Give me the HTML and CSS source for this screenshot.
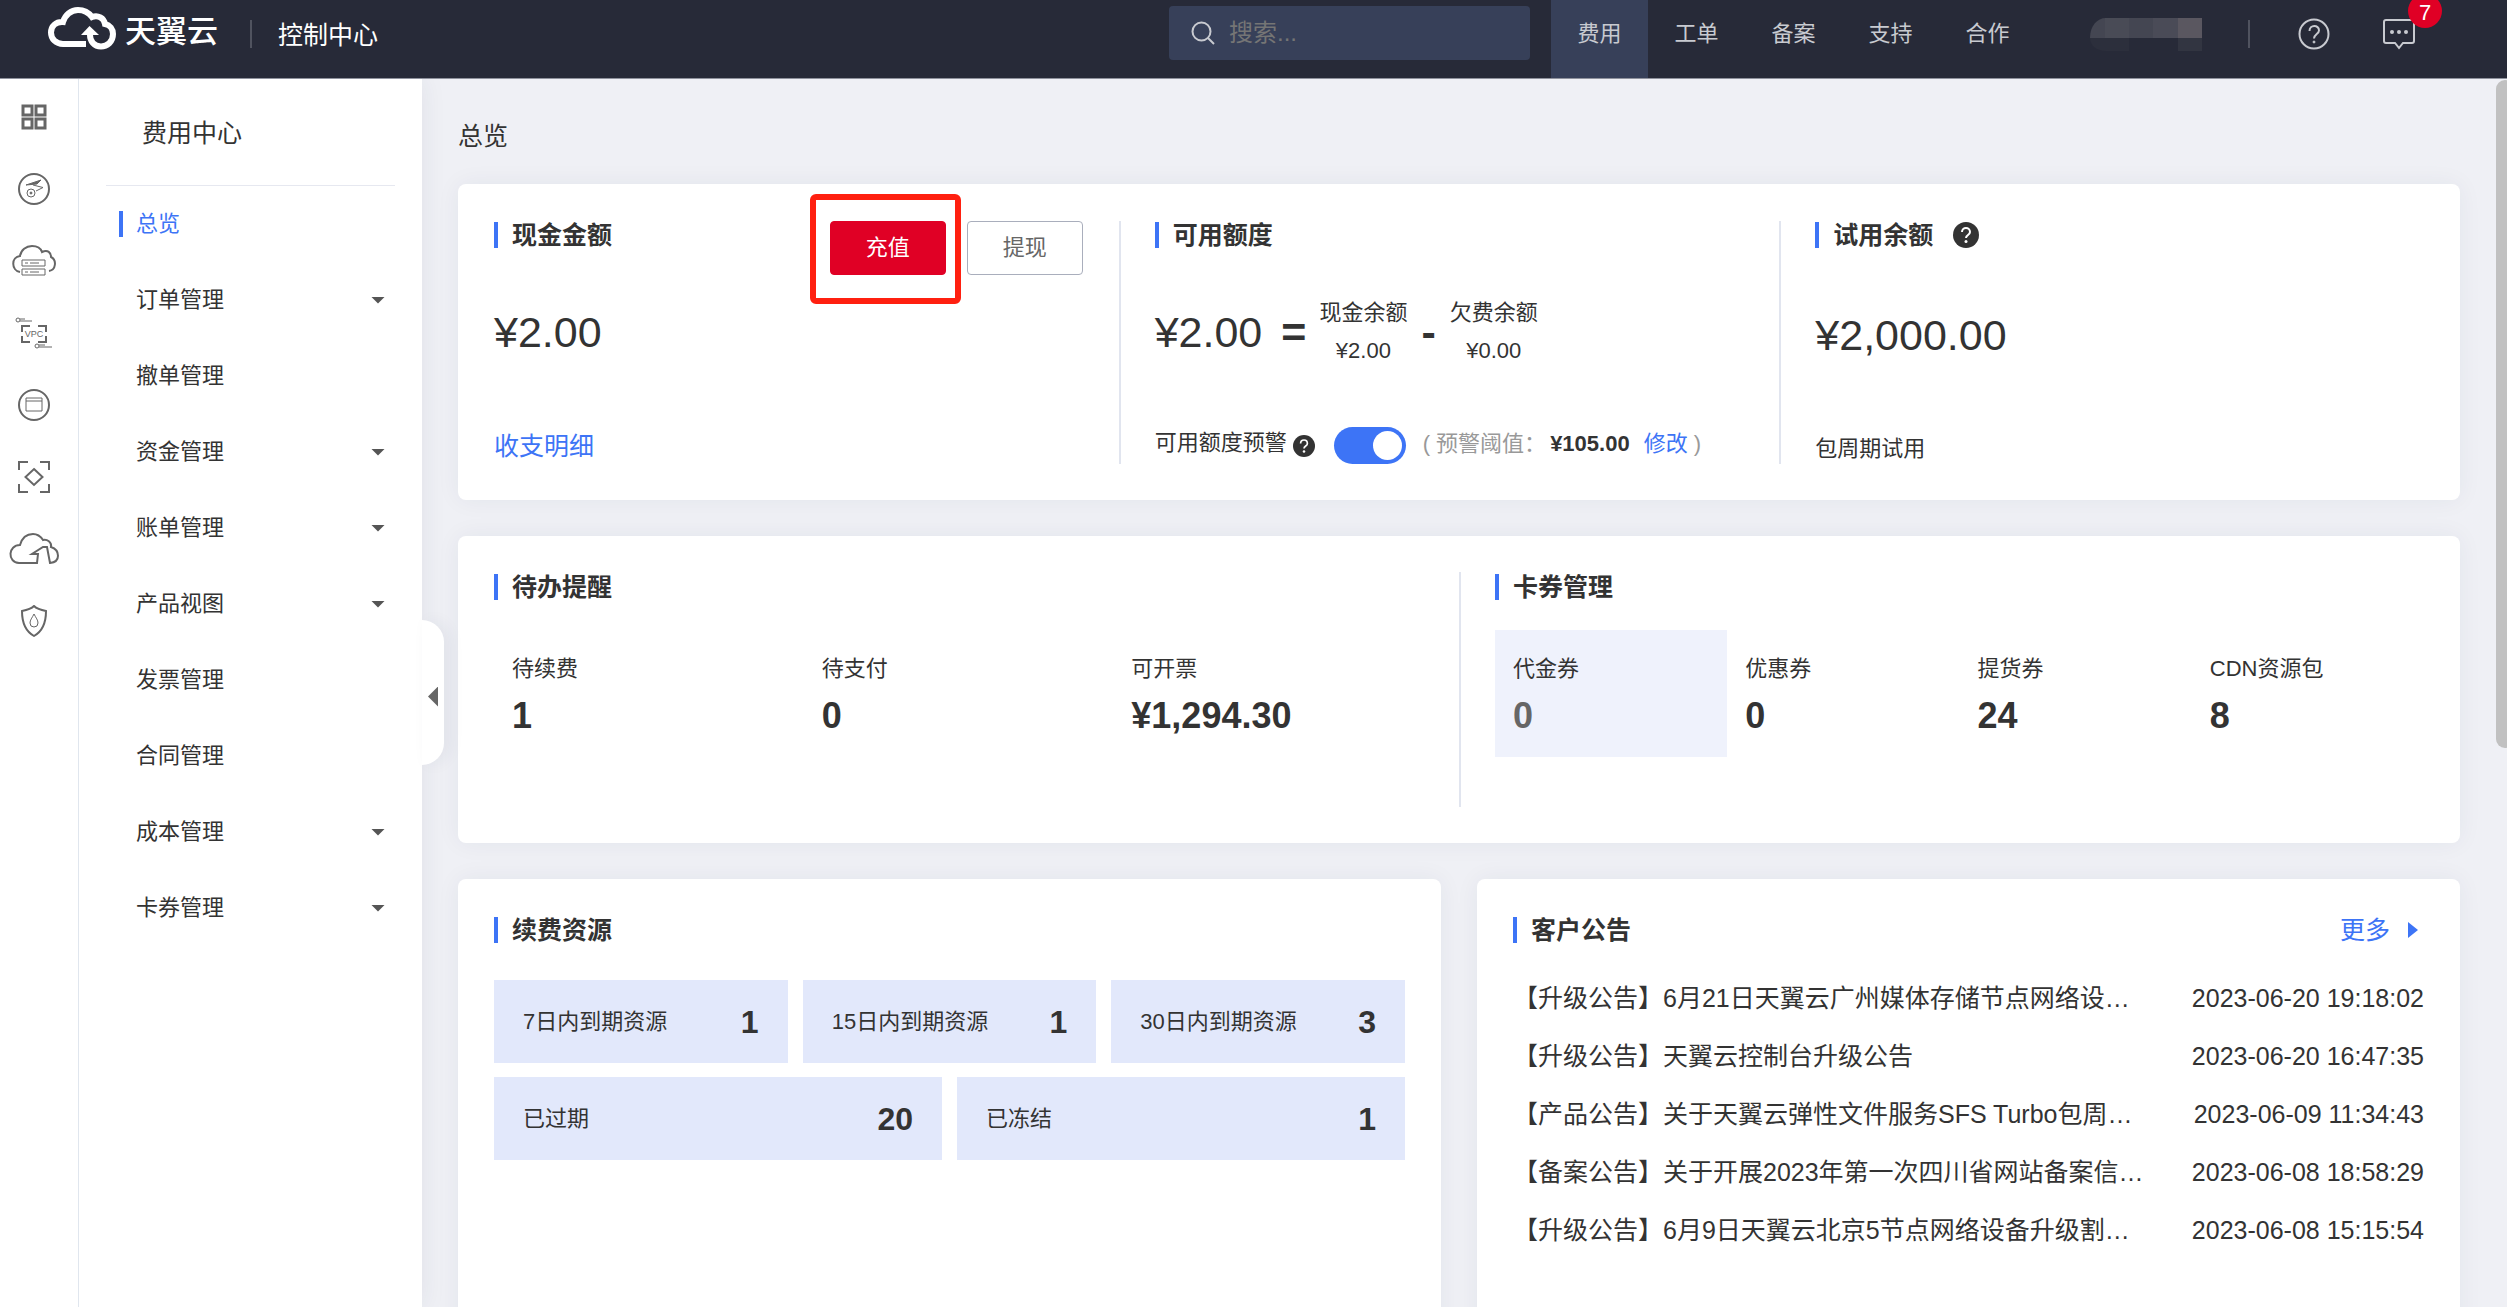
FILE: index.html
```html
<!DOCTYPE html>
<html lang="zh-CN">
<head>
<meta charset="utf-8">
<title>费用中心 - 总览</title>
<link rel="stylesheet" href="styles.css">
</head>
<body>
<div class="app">
  <header class="topbar">
    <div class="brand">
      <svg class="brand-mark" viewBox="0 0 68 43" width="68" height="43" fill="none" stroke="#fff" stroke-width="6">
        <path d="M38 37H15C8 37 3 32 3 25.500C3 19 8 14.500 15 15C17 8 23 3 30 3C37 3 41 6 44 10C50 7.500 56 11 57 17C62 18 65 22 65 27C65 35 59 39.500 53 39.500C46 39.500 42 34 42 28"/>
        <path d="M33 28L41.500 19L51 28Z" fill="#fff" stroke="none"/>
      </svg>
      <span class="brand-name">天翼云</span>
      <span class="rule"></span>
      <a class="console" href="#">控制中心</a>
    </div>
    <label class="search">
      <svg viewBox="0 0 24 24" width="24" height="24" fill="none" stroke="#c8cad0" stroke-width="2"><circle cx="10.500" cy="10.500" r="9"/><path d="M17 17l6 6"/></svg>
      <input type="search" placeholder="搜索..." aria-label="搜索">
    </label>
    <nav class="topnav">
      <a class="is-active" href="#">费用</a>
      <a href="#">工单</a>
      <a href="#">备案</a>
      <a href="#">支持</a>
      <a href="#">合作</a>
    </nav>
    <div class="tools">
      <svg class="account" viewBox="0 0 112 33" width="112" height="33">
        <path d="M16 0H112V20H0C0 8 7 0 16 0Z" fill="#444652"/>
        <path d="M0 20H39V33H16C7 33 0 28 0 20Z" fill="#2c2f3c"/>
        <rect x="15" width="24" height="20" fill="#494b56"/>
        <rect x="63" width="25" height="20" fill="#4a4b57"/>
        <rect x="88" width="24" height="20" fill="#5a5760"/>
        <rect x="88" y="20" width="24" height="13" fill="#323541"/>
      </svg>
      <span class="rule"></span>
      <button class="icon-btn" type="button" aria-label="帮助">
        <svg viewBox="0 0 32 32" width="32" height="32" fill="none" stroke="#c8cad0" stroke-width="2"><circle cx="16" cy="16" r="14.500"/><path d="M11.500 13C11.500 6.500 21 6.500 21 12.500C21 16 16 16 16 20.500"/><circle cx="16" cy="24" r="1" fill="#c8cad0" stroke-width="1"/></svg>
      </button>
      <button class="icon-btn message" type="button" aria-label="消息">
        <svg viewBox="0 0 32 32" width="32" height="32" fill="none" stroke="#c8cad0" stroke-width="2"><path d="M3 2H29Q31 2 31 4V23Q31 25 29 25H20L16 30L12 25H3Q1 25 1 23V4Q1 2 3 2Z"/><g fill="#c8cad0" stroke="none"><circle cx="9" cy="14" r="2"/><circle cx="16" cy="14" r="2"/><circle cx="23" cy="14" r="2"/></g></svg>
        <span class="badge">7</span>
      </button>
    </div>
  </header>

  <div class="body">
    <nav class="rail" aria-label="产品">
      <a href="#" aria-label="全部产品"><svg viewBox="0 0 26 26" width="26" height="26" fill="none" stroke="#666" stroke-width="3"><rect x="2" y="2" width="9" height="9"/><rect x="15" y="2" width="9" height="9"/><rect x="2" y="15" width="9" height="9"/><rect x="15" y="15" width="9" height="9"/></svg></a>
      <a href="#" aria-label="弹性伸缩"><svg viewBox="0 0 32 32" width="32" height="32" fill="none" stroke="#666" stroke-width="1"><circle cx="16" cy="16" r="15" stroke-width="2"/><path d="M8 12L23 7L19 11Z" fill="#666"/><path d="M15 12L25 14.500L18 18"/><circle cx="13" cy="20" r="4"/><circle cx="13" cy="20" r="1" fill="#666"/></svg></a>
      <a href="#" aria-label="云主机"><svg viewBox="0 0 44 32" width="44" height="32" fill="none" stroke="#666" stroke-width="2"><path d="M8 27C-1 25 -1 12 8 11C9 5 14 1 20 1C26 1 29 4 30 7C36 4 39 8 39 12C45 15 44 25 37 26"/><path d="M10 15H33V21H10ZM10 24H33V30H10Z" stroke-width="1"/><path d="M13 18H16M18 18H27M13 27H16M18 27H27" stroke-width="1"/></svg></a>
      <a href="#" aria-label="虚拟私有云"><svg viewBox="0 0 38 32" width="38" height="32" fill="none" stroke="#666"><path d="M7 15V9H15M23 9H31V15M31 19V25H23M15 25H7V19" stroke-width="2"/><circle cx="3" cy="3" r="2"/><path d="M5 2H10M5 4H17" stroke-width="1"/><circle cx="22" cy="29" r="2"/><path d="M24 28H30M24 30H37"/><text x="19" y="20" text-anchor="middle" class="vpc">VPC</text></svg></a>
      <a href="#" aria-label="云桌面"><svg viewBox="0 0 32 32" width="32" height="32" fill="none" stroke="#666"><circle cx="16" cy="16" r="15" stroke-width="2"/><path d="M8 9H24V22H8ZM8 12H24"/></svg></a>
      <a href="#" aria-label="容器"><svg viewBox="0 0 32 32" width="32" height="32" fill="none" stroke="#666" stroke-width="2"><path d="M1 9V1H10M22 1H31V9M31 23V31H22M10 31H1V23M16 8L24.500 16L16 24L7.500 16Z"/></svg></a>
      <a href="#" aria-label="云间高速"><svg viewBox="0 0 50 32" width="50" height="32" fill="none" stroke="#666" stroke-width="2"><path d="M29 21L28 30H10C-2 29 -1 12 11 12C13 5 17 1 24 1C29 1 32 4 34 7C38 6 43 9 42 14C51 17 52 29 41 30L38 14H34L23 21Z"/></svg></a>
      <a href="#" aria-label="安全"><svg viewBox="0 0 26 32" width="26" height="32" fill="none" stroke="#666" stroke-width="2"><path d="M13 1C16 4 20 5 25 6C25 18 22 26 13 31C4 26 1 18 1 6C6 5 10 4 13 1Z"/><path d="M13 9C15 13 17 15 17 18A4 4 0 0 1 9 18C9 15 11 13 13 9Z" stroke-width="1"/></svg></a>
    </nav>

    <aside class="sidebar">
      <h2 class="sidebar-title">费用中心</h2>
      <ul class="menu">
        <li><a class="is-active" href="#">总览</a></li>
        <li><a class="has-sub" href="#">订单管理</a></li>
        <li><a href="#">撤单管理</a></li>
        <li><a class="has-sub" href="#">资金管理</a></li>
        <li><a class="has-sub" href="#">账单管理</a></li>
        <li><a class="has-sub" href="#">产品视图</a></li>
        <li><a href="#">发票管理</a></li>
        <li><a href="#">合同管理</a></li>
        <li><a class="has-sub" href="#">成本管理</a></li>
        <li><a class="has-sub" href="#">卡券管理</a></li>
      </ul>
      <button class="collapse" type="button" aria-label="收起菜单"></button>
    </aside>

    <main class="content">
      <h1 class="page-title">总览</h1>

      <section class="card balances">
        <div class="balance">
          <div class="balance-head">
            <h2 class="heading">现金金额</h2>
            <div class="actions">
              <span class="highlight"><button class="btn btn-primary" type="button">充值</button></span>
              <button class="btn" type="button">提现</button>
            </div>
          </div>
          <div class="amount">¥2.00</div>
          <div class="balance-foot"><a class="detail" href="#">收支明细</a></div>
        </div>
        <div class="balance">
          <div class="balance-head"><h2 class="heading">可用额度</h2></div>
          <div class="amount formula">
            <span>¥2.00</span>
            <b class="equals">=</b>
            <span class="term">现金余额<span>¥2.00</span></span>
            <b>-</b>
            <span class="term">欠费余额<span>¥0.00</span></span>
          </div>
          <div class="balance-foot">
            <label for="alert">可用额度预警</label>
            <span class="help small"><svg viewBox="0 0 26 26" aria-hidden="true"><circle cx="13" cy="13" r="13" fill="#333"/><path d="M9 10C9 4.500 17 4.500 17 10C17 13 13 13 13 16" fill="none" stroke="#fff" stroke-width="2"/><circle cx="13" cy="19.500" r="1.500" fill="#fff"/></svg></span>
            <input class="switch" id="alert" type="checkbox" role="switch" checked>
            <span class="threshold">( 预警阈值：<b>¥105.00</b><a href="#">修改</a>)</span>
          </div>
        </div>
        <div class="balance">
          <div class="balance-head">
            <h2 class="heading">试用余额</h2>
            <span class="help"><svg viewBox="0 0 26 26" aria-hidden="true"><circle cx="13" cy="13" r="13" fill="#333"/><path d="M9 10C9 4.500 17 4.500 17 10C17 13 13 13 13 16" fill="none" stroke="#fff" stroke-width="2"/><circle cx="13" cy="19.500" r="1.500" fill="#fff"/></svg></span>
          </div>
          <div class="amount trial">¥2,000.00</div>
          <div class="balance-foot trial">包周期试用</div>
        </div>
      </section>

      <section class="card summary">
        <div class="summary-part">
          <h2 class="heading">待办提醒</h2>
          <div class="stats">
            <a class="stat" href="#">待续费<b>1</b></a>
            <a class="stat" href="#">待支付<b>0</b></a>
            <a class="stat" href="#">可开票<b>¥1,294.30</b></a>
          </div>
        </div>
        <div class="summary-part">
          <h2 class="heading">卡券管理</h2>
          <div class="stats">
            <a class="stat is-active" href="#">代金券<b>0</b></a>
            <a class="stat" href="#">优惠券<b>0</b></a>
            <a class="stat" href="#">提货券<b>24</b></a>
            <a class="stat" href="#">CDN资源包<b>8</b></a>
          </div>
        </div>
      </section>

      <div class="bottom">
        <section class="card panel">
          <h2 class="heading">续费资源</h2>
          <div class="tiles">
            <a class="tile" href="#">7日内到期资源<b>1</b></a>
            <a class="tile" href="#">15日内到期资源<b>1</b></a>
            <a class="tile" href="#">30日内到期资源<b>3</b></a>
            <a class="tile wide" href="#">已过期<b>20</b></a>
            <a class="tile wide" href="#">已冻结<b>1</b></a>
          </div>
        </section>
        <section class="card panel">
          <div class="panel-head">
            <h2 class="heading">客户公告</h2>
            <a class="more" href="#">更多</a>
          </div>
          <ul class="notices">
            <li><a href="#">【升级公告】6月21日天翼云广州媒体存储节点网络设…</a><time>2023-06-20 19:18:02</time></li>
            <li><a href="#">【升级公告】天翼云控制台升级公告</a><time>2023-06-20 16:47:35</time></li>
            <li><a href="#">【产品公告】关于天翼云弹性文件服务SFS Turbo包周…</a><time>2023-06-09 11:34:43</time></li>
            <li><a href="#">【备案公告】关于开展2023年第一次四川省网站备案信…</a><time>2023-06-08 18:58:29</time></li>
            <li><a href="#">【升级公告】6月9日天翼云北京5节点网络设备升级割…</a><time>2023-06-08 15:15:54</time></li>
          </ul>
        </section>
      </div>
      <div class="scroll-thumb"></div>
    </main>
  </div>
</div>
</body>
</html>
```
FILE: styles.css
```css
:root {
  --text: #333;
  --blue: #3d74f6;
  --red: #e00025;
  --line: #e1e5ef;
  --navy: #272a38;
  --navy-light: #374059;
}

* { box-sizing: border-box; }

body {
  margin: 0;
  color: var(--text);
  font: 22px/32px "Liberation Sans", "Noto Sans CJK SC", sans-serif;
}

h1, h2, ul { margin: 0; padding: 0; font-weight: 400; }
ul { list-style: none; }
a { color: inherit; text-decoration: none; }
button, input { margin: 0; font: inherit; }
svg { display: block; flex: none; }

.app {
  display: flex;
  flex-direction: column;
  height: 100vh;
  overflow: hidden;
}

/* Top bar */
.topbar {
  display: flex;
  flex: none;
  height: 79px;
  padding: 0 92px 0 48px;
  background: var(--navy);
  border-bottom: 1px solid #8f929d;
  color: #c8cad0;
}

.brand, .tools {
  display: flex;
  align-items: center;
  height: 68px;
}

.brand-mark { margin-bottom: 12px; }

.brand-name {
  margin: 0 32px 4px 9px;
  color: #fff;
  font-size: 31px;
  font-weight: 500;
}

.rule {
  width: 2px;
  height: 28px;
  background: #50535f;
}

.console {
  margin-left: 26px;
  padding-top: 2px;
  color: #fff;
  font-size: 25px;
}

.search {
  display: flex;
  align-items: center;
  gap: 14px;
  width: 361px;
  height: 54px;
  margin: 6px 21px 0 auto;
  padding: 0 22px;
  border-radius: 4px;
  background: var(--navy-light);
}

.search input {
  width: 100%;
  padding: 0;
  border: 0;
  outline: 0;
  background: none;
  color: #fff;
  font-size: 24px;
}

.search input::placeholder { color: #757575; }

.topnav { display: flex; }

.topnav a {
  width: 97px;
  line-height: 67px;
  text-align: center;
}

.topnav .is-active { background: var(--navy-light); }

.account { margin: 0 46px 0 54px; }

.icon-btn {
  position: relative;
  margin-left: 48px;
  padding: 0;
  border: 0;
  background: none;
}

.message { margin-left: 53px; }

.badge {
  position: absolute;
  top: -24px;
  right: -27px;
  width: 34px;
  height: 34px;
  padding-top: 6px;
  border-radius: 50%;
  background: var(--red);
  color: #fff;
  line-height: 26px;
}

/* Page frame */
.body {
  display: grid;
  grid-template-columns: 79px 343px 1fr;
  flex: 1;
  min-height: 0;
}

.rail {
  padding-top: 2px;
  border-right: 1px solid #e0e6ee;
  background: #fff;
}

.rail a {
  display: flex;
  align-items: center;
  justify-content: center;
  height: 72px;
  margin-right: 10px;
}

.vpc {
  fill: #666;
  stroke: none;
  font-size: 9px;
}

.sidebar {
  position: relative;
  z-index: 1;
  padding: 0 27px;
  background: #fff;
  box-shadow: 0 0 24px rgba(40, 50, 80, .08);
  clip-path: inset(0 -60px 0 0);
}

.sidebar-title {
  padding: 2px 0 0 36px;
  border-bottom: 1px solid #e6e8f0;
  font-size: 25px;
  line-height: 104px;
}

.menu a {
  display: flex;
  align-items: center;
  gap: 13px;
  height: 76px;
  padding: 0 10px 0 13px;
}

.menu a::before {
  width: 4px;
  height: 26px;
  content: "";
}

.menu .is-active { color: var(--blue); }
.menu .is-active::before { background: var(--blue); }

.menu .has-sub::after {
  width: 14px;
  height: 7px;
  margin-left: auto;
  background: #555;
  clip-path: polygon(0 0, 100% 0, 50% 100%);
  content: "";
}

.collapse {
  position: absolute;
  top: 541px;
  left: 100%;
  width: 22px;
  height: 145px;
  padding: 0 6px;
  border: 0;
  border-radius: 0 22px 22px 0;
  background: #fff;
  box-shadow: 6px 0 16px rgba(40, 50, 80, .06);
}

.collapse::before {
  display: block;
  width: 10px;
  height: 20px;
  margin-top: 8px;
  background: #666;
  clip-path: polygon(100% 0, 100% 100%, 0 50%);
  content: "";
}

.content {
  position: relative;
  display: flex;
  flex-direction: column;
  gap: 36px;
  min-width: 0;
  padding: 39px 47px 0 36px;
  overflow: hidden;
  background: #eff0f5;
}

.page-title {
  margin-bottom: -6px;
  font-size: 25px;
  line-height: 36px;
}

.card {
  border-radius: 8px;
  background: #fff;
  box-shadow: 0 0 24px rgba(40, 50, 80, .06);
}

.heading {
  display: flex;
  align-items: center;
  gap: 14px;
  font-size: 25px;
  font-weight: 700;
  line-height: 28px;
}

.heading::before {
  width: 4px;
  height: 26px;
  background: var(--blue);
  content: "";
}

/* Balances */
.balances {
  display: grid;
  grid-template-columns: 33% 33% 34%;
  padding: 37px 0 36px;
}

.balance { padding: 0 36px; }

.balance + .balance, .summary-part + .summary-part {
  padding-left: 34px;
  border-left: 2px solid var(--line);
}

.balance-head {
  display: flex;
  align-items: flex-start;
  gap: 20px;
  height: 54px;
}

.actions {
  display: flex;
  gap: 21px;
  margin-left: auto;
}

.btn {
  width: 116px;
  height: 54px;
  border: 1px solid #a9aebc;
  border-radius: 4px;
  background: #fff;
  color: #666;
}

.btn-primary {
  border-color: var(--red);
  background: var(--red);
  color: #fff;
}

.highlight { position: relative; display: flex; }

.highlight::after {
  position: absolute;
  inset: -27px -15px -29px -20px;
  border: 6px solid #ff2010;
  border-radius: 6px;
  content: "";
  pointer-events: none;
}

.amount {
  display: flex;
  align-items: center;
  height: 114px;
  font-size: 43px;
  line-height: 48px;
}

.trial { padding-top: 6px; }
.formula { gap: 14px; }
.equals { margin: 0 -1px 0 5px; }

.term {
  display: flex;
  flex-direction: column;
  gap: 6px;
  align-items: center;
  font-size: 22px;
  line-height: 32px;
}

.balance-foot {
  display: flex;
  align-items: center;
  height: 37px;
  margin-top: 38px;
}

.balance-foot label { padding-bottom: 6px; }
.detail { color: var(--blue); font-size: 25px; }
.help { width: 26px; margin-top: 1px; }
.small { width: 22px; margin: 0 19px 0 6px; }

.switch {
  width: 72px;
  height: 37px;
  padding: 4px;
  border-radius: 19px;
  background: var(--blue);
  appearance: none;
}

.switch::before {
  display: block;
  width: 29px;
  height: 29px;
  margin-left: auto;
  border-radius: 50%;
  background: #fff;
  content: "";
}

.switch:not(:checked) { background: #c3c7d1; }
.switch:not(:checked)::before { margin-left: 0; }

.threshold {
  margin-left: 17px;
  padding-bottom: 4px;
  color: #999;
  white-space: pre;
}

.threshold b { margin: 0 14px 0 4px; color: var(--text); }
.threshold a { margin-right: 6px; color: var(--blue); }

/* Reminders and coupons */
.summary {
  display: grid;
  grid-template-columns: 1fr 1fr;
  padding: 36px 0;
}

.summary-part {
  min-height: 235px;
  padding: 1px 36px 0;
}

.stats {
  display: grid;
  grid-auto-columns: 1fr;
  grid-auto-flow: column;
  margin-top: 29px;
}

.stat {
  display: flex;
  flex-direction: column;
  gap: 9px;
  padding: 23px 0 19px 18px;
}

.stat b { font-size: 36px; line-height: 44px; }
.stat.is-active { background: #eff2fc; }
.stat.is-active b { color: #666; }

/* Renewals and notices */
.bottom {
  display: grid;
  grid-template-columns: 1fr 1fr;
  gap: 36px;
}

.panel {
  min-width: 0;
  min-height: 500px;
  padding: 37px 36px;
}

.tiles {
  display: grid;
  grid-template-columns: repeat(6, 1fr);
  gap: 14px 15px;
  margin-top: 36px;
}

.tile {
  display: flex;
  grid-column: span 2;
  align-items: center;
  justify-content: space-between;
  height: 83px;
  padding: 0 29px;
  background: #e2e8fb;
}

.wide { grid-column: span 3; }
.tile b { font-size: 32px; }

.panel-head {
  display: flex;
  align-items: center;
  justify-content: space-between;
}

.more {
  display: flex;
  align-items: center;
  gap: 18px;
  padding-right: 6px;
  color: var(--blue);
  font-size: 25px;
  line-height: 28px;
}

.more::after {
  width: 10px;
  height: 16px;
  background: var(--blue);
  clip-path: polygon(0 0, 100% 50%, 0 100%);
  content: "";
}

.notices { margin-top: 25px; }

.notices li {
  display: flex;
  justify-content: space-between;
  font-size: 25px;
  line-height: 58px;
  white-space: nowrap;
}

.notices a { overflow: hidden; text-overflow: ellipsis; }

.scroll-thumb {
  position: absolute;
  top: 1px;
  right: -7px;
  width: 18px;
  height: 668px;
  border-radius: 9px;
  background: #c1c1c1;
}
```
